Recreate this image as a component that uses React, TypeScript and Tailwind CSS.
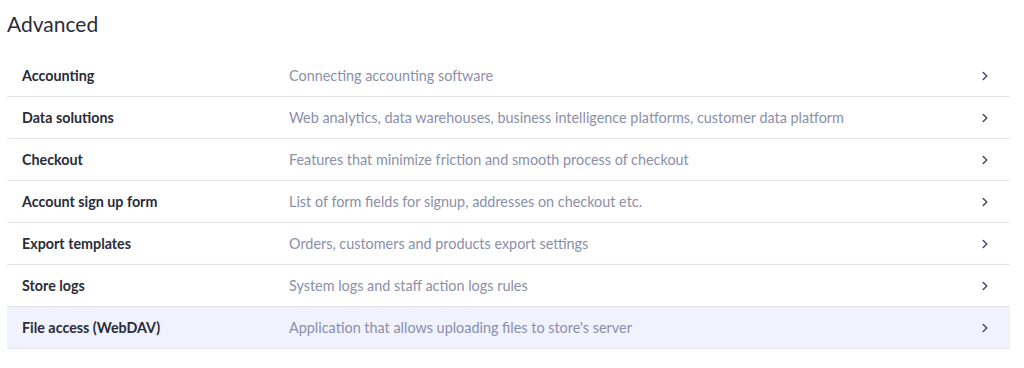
import { ChevronRight } from 'lucide-react';

type Row = { title: string; desc: string; active?: boolean };

const rows: Row[] = [
  { title: 'Accounting', desc: 'Connecting accounting software' },
  { title: 'Data solutions', desc: 'Web analytics, data warehouses, business intelligence platforms, customer data platform' },
  { title: 'Checkout', desc: 'Features that minimize friction and smooth process of checkout' },
  { title: 'Account sign up form', desc: 'List of form fields for signup, addresses on checkout etc.' },
  { title: 'Export templates', desc: 'Orders, customers and products export settings' },
  { title: 'Store logs', desc: 'System logs and staff action logs rules' },
  { title: 'File access (WebDAV)', desc: "Application that allows uploading files to store's server", active: true },
];

export default function App() {
  return (
    <div className="w-[1024px] h-[368px] bg-white px-[7px] font-['Lato',sans-serif]">
      <h2 className="pt-[10px] text-[21px] leading-[28px] text-[#2a2c38]">Advanced</h2>
      <div className="mt-[17px] w-[1003px]">
        {rows.map((r) => (
          <div
            key={r.title}
            className={`flex items-center h-[42px] border-b border-[#e4e5ef] ${r.active ? 'bg-[#f0f2fd]' : ''}`}
          >
            <div className="w-[282px] pl-[15px] text-[14.3px] font-bold text-[#2a2c38]">{r.title}</div>
            <div className="flex-1 text-[14.4px] text-[#8a8fab]">{r.desc}</div>
            <ChevronRight size={14} strokeWidth={2.8} className="mr-[18px] text-[#4b4f68]" />
          </div>
        ))}
      </div>
    </div>
  );
}
